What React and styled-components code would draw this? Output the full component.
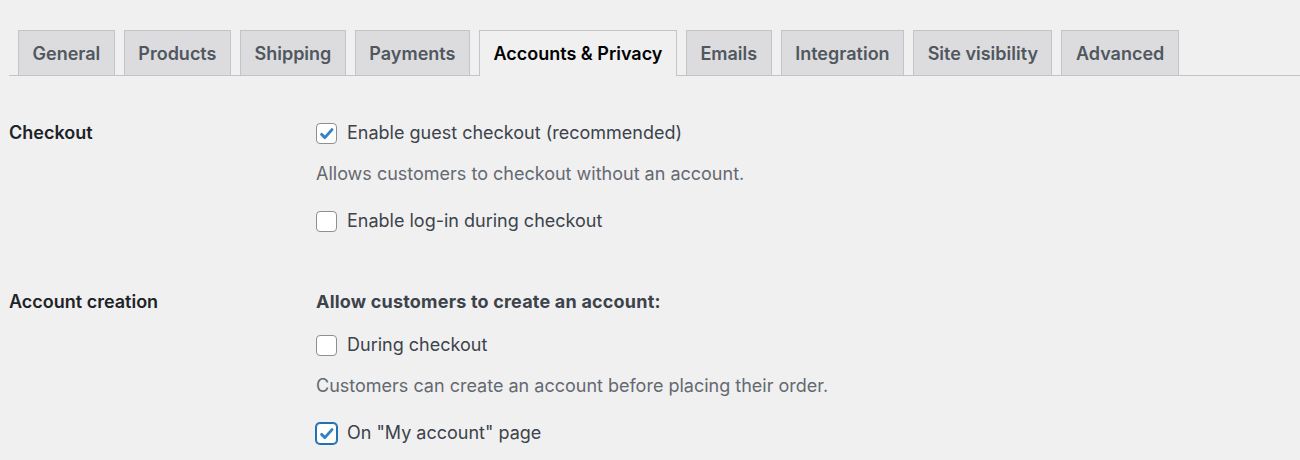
import React from "react";
import styled, { createGlobalStyle } from "styled-components";

const Global = createGlobalStyle`
  html, body { margin: 0; padding: 0; background: #f0f0f1; }
  body { font-family: Inter, "Noto Sans", "Liberation Sans", sans-serif; color: #3c434a; }
`;

const Page = styled.div`
  padding: 30px 0 0 9px;
  width: 1291px;
`;

const TabBar = styled.nav`
  display: flex;
  border-bottom: 1px solid #c3c4c7;
  height: 45px;
`;

const Tab = styled.a`
  display: block;
  box-sizing: border-box;
  margin-left: 9px;
  height: ${(p) => (p.$active ? "46px" : "45px")};
  padding: 0 13.5px;
  border: 1px solid #c3c4c7;
  border-bottom: none;
  background: ${(p) => (p.$active ? "#f0f0f1" : "#dcdcde")};
  color: ${(p) => (p.$active ? "#000" : "#50575e")};
  font-size: 18px;
  font-weight: 600;
  line-height: 46px;
  text-decoration: none;
  white-space: nowrap;
  position: relative;
  z-index: ${(p) => (p.$active ? 1 : 0)};
`;

const Section = styled.section`
  display: grid;
  grid-template-columns: 307px 1fr;
  padding-top: ${(p) => p.$top}px;
`;

const Label = styled.h3`
  margin: 0;
  font-size: 18px;
  font-weight: 600;
  line-height: 28px;
  color: #1d2327;
`;

const Fields = styled.div`
  display: flex;
  flex-direction: column;
`;

const Option = styled.label`
  display: flex;
  align-items: center;
  gap: 10px;
  height: 28px;
  margin-top: ${(p) => p.$mt || 0}px;
  font-size: 18px;
  line-height: 28px;
  color: #3c434a;
`;

const Box = styled.span`
  box-sizing: border-box;
  position: relative;
  width: 21px;
  height: 21px;
  flex: none;
  border-radius: 4px;
  background: #fff;
  border: 1px solid #8c8f94;
  box-shadow: ${(p) => (p.$focus ? "0 0 0 1px #2271b1" : "none")};
  border-color: ${(p) => (p.$focus ? "#2271b1" : "#8c8f94")};

  svg {
    position: absolute;
    left: -1px;
    top: -1px;
  }
`;

const Desc = styled.p`
  margin: ${(p) => p.$mt || 0}px 0 0;
  font-size: 18px;
  line-height: 28px;
  color: #646970;
`;

const Heading = styled.p`
  margin: 0;
  font-size: 18px;
  font-weight: 700;
  letter-spacing: 0.2px;
  line-height: 28px;
  color: #3c434a;
`;

const Check = () => (
  <svg width="21" height="21" viewBox="0 0 21 21">
    <path d="M5.6 11.4 L8.9 14.6 L16 6.6" fill="none" stroke="#3582c4" strokeWidth="2.9" strokeLinecap="round" strokeLinejoin="round" />
  </svg>
);

const Checkbox = ({ checked, focus, children, mt }) => (
  <Option $mt={mt}>
    <Box $focus={focus}>{checked && <Check />}</Box>
    {children}
  </Option>
);

const tabs = ["General", "Products", "Shipping", "Payments", "Accounts & Privacy", "Emails", "Integration", "Site visibility", "Advanced"];

export default function App() {
  return (
    <>
      <Global />
      <Page>
        <TabBar>
          {tabs.map((t) => (
            <Tab key={t} $active={t === "Accounts & Privacy"}>{t}</Tab>
          ))}
        </TabBar>
        <Section $top={43}>
          <Label>Checkout</Label>
          <Fields>
            <Checkbox checked>Enable guest checkout (recommended)</Checkbox>
            <Desc $mt={13}>Allows customers to checkout without an account.</Desc>
            <Checkbox mt={19}>Enable log-in during checkout</Checkbox>
          </Fields>
        </Section>
        <Section $top={53}>
          <Label>Account creation</Label>
          <Fields>
            <Heading>Allow customers to create an account:</Heading>
            <Checkbox mt={15}>During checkout</Checkbox>
            <Desc $mt={13}>Customers can create an account before placing their order.</Desc>
            <Checkbox checked focus mt={19}>On "My account" page</Checkbox>
          </Fields>
        </Section>
      </Page>
    </>
  );
}
